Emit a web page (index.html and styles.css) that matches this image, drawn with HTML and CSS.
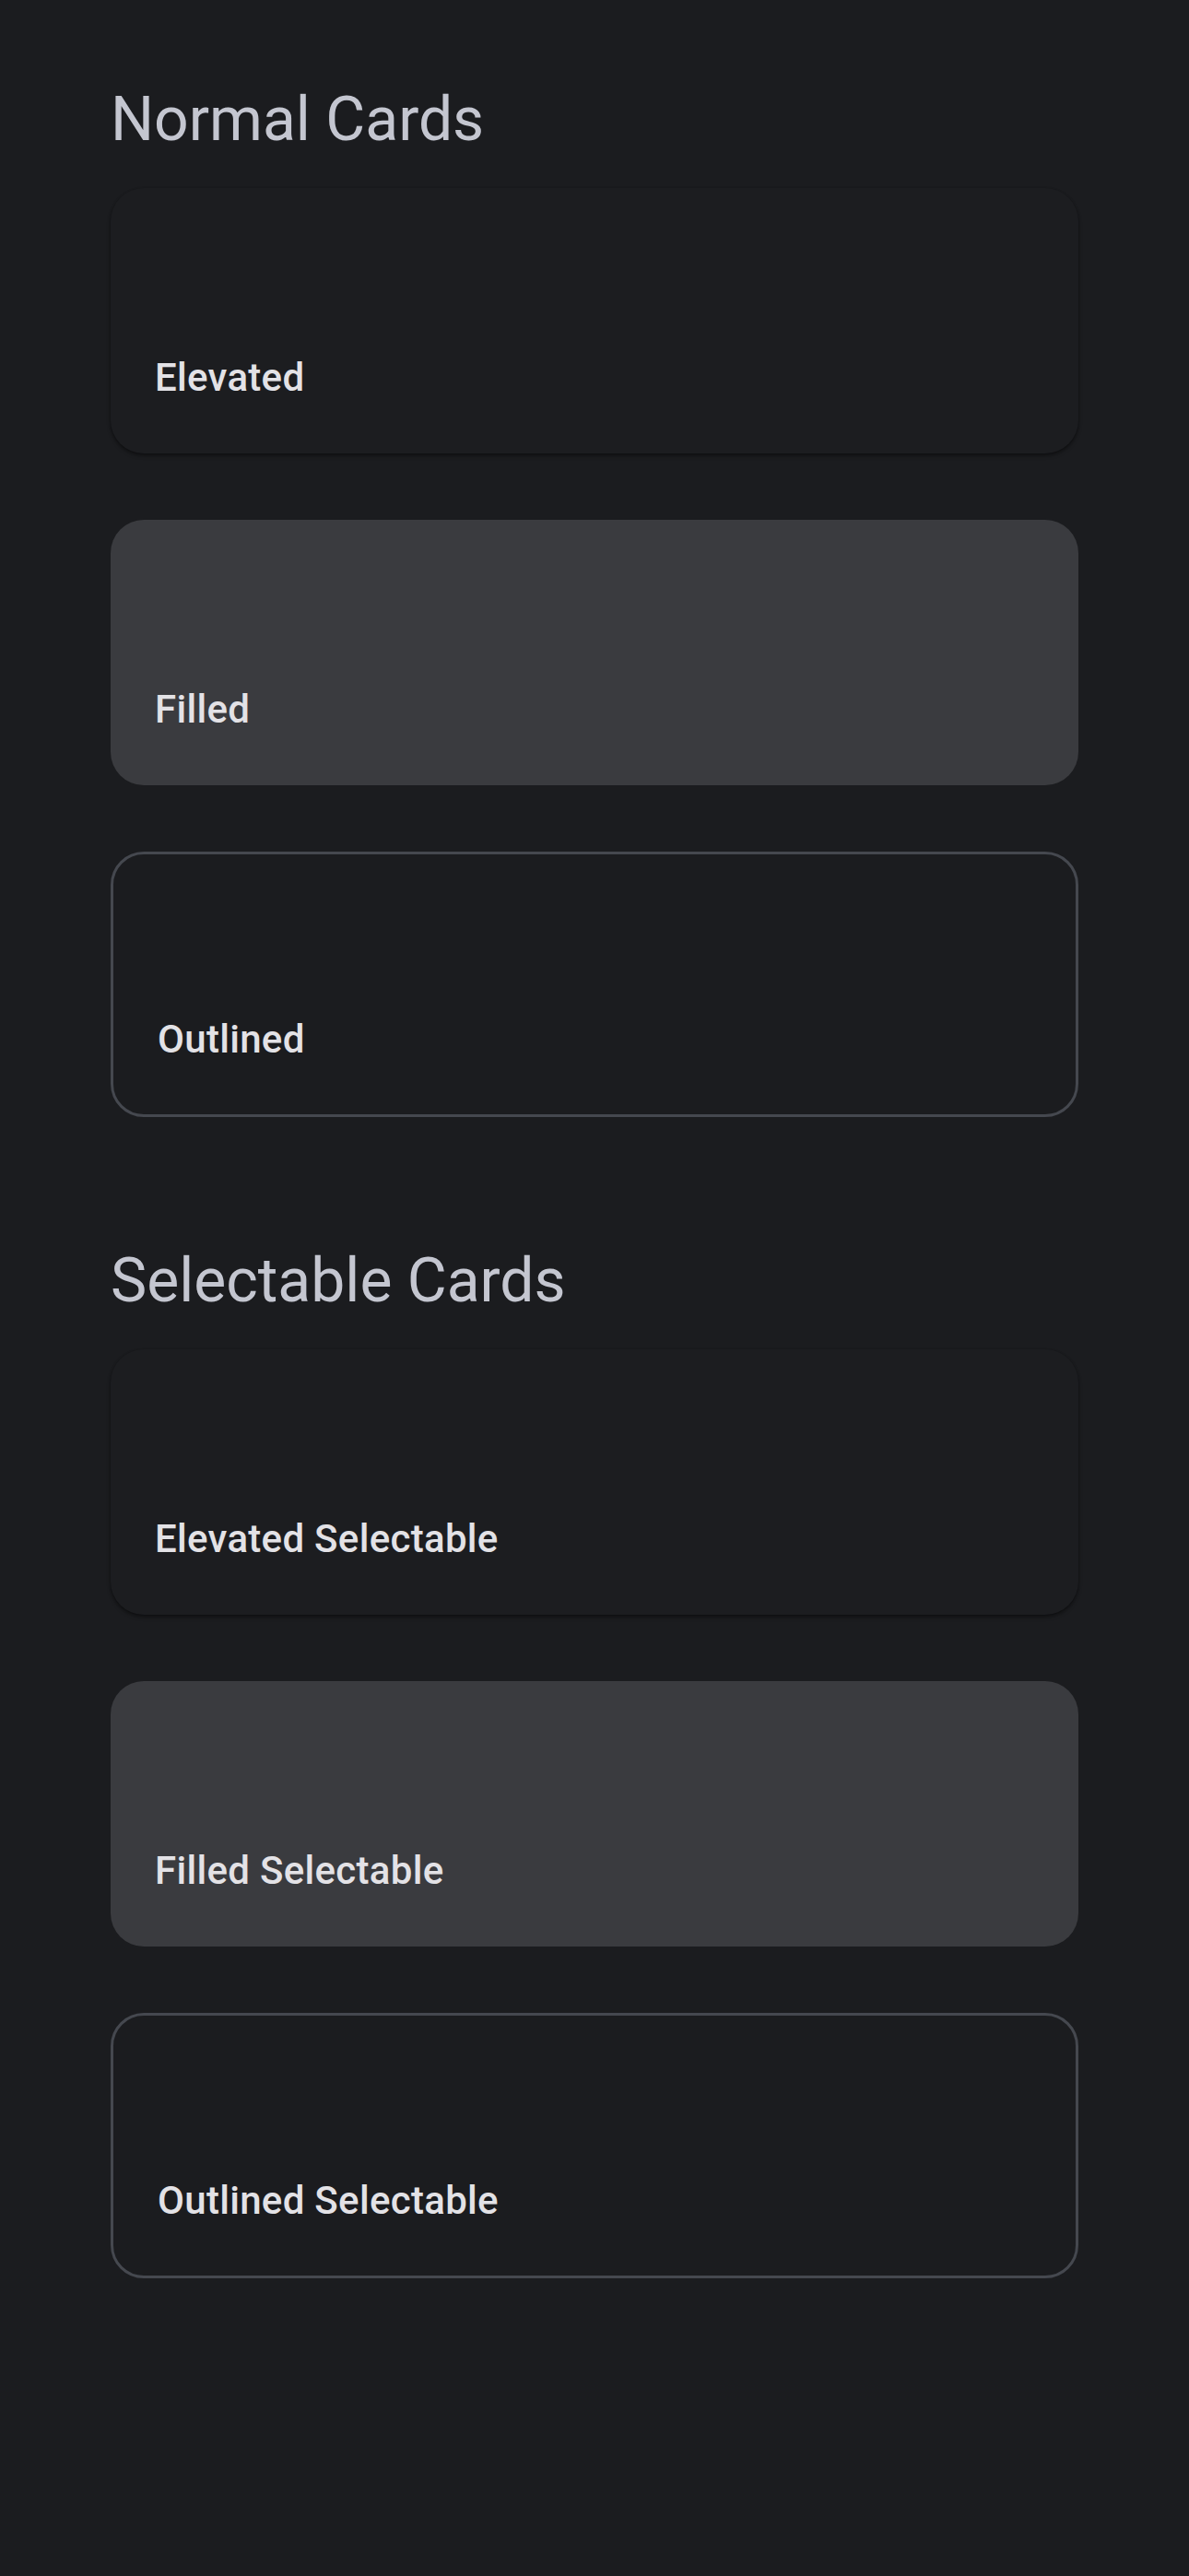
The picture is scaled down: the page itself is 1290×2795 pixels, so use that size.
FILE: index.html
```html
<!DOCTYPE html>
<html lang="en">
<head>
<meta charset="utf-8">
<title>Cards</title>
<link rel="stylesheet" href="styles.css">
</head>
<body>
<main class="page">
  <section class="section">
    <h2 class="section-title">Normal Cards</h2>
    <div class="card-list">
      <div class="card card-elevated"><span class="card-label">Elevated</span></div>
      <div class="card card-filled"><span class="card-label">Filled</span></div>
      <div class="card card-outlined"><span class="card-label">Outlined</span></div>
    </div>
  </section>
  <section class="section section-second">
    <h2 class="section-title">Selectable Cards</h2>
    <div class="card-list">
      <div class="card card-elevated"><span class="card-label">Elevated Selectable</span></div>
      <div class="card card-filled"><span class="card-label">Filled Selectable</span></div>
      <div class="card card-outlined"><span class="card-label">Outlined Selectable</span></div>
    </div>
  </section>
</main>
</body>
</html>
```

FILE: styles.css
```css
html, body {
  margin: 0;
  padding: 0;
  background: #1b1c1f;
}

body {
  font-family: Roboto, "Noto Sans", "Liberation Sans", sans-serif;
  min-height: 2795px;
}

.page {
  padding: 88px 120px 0 120px;
}

.section-title {
  margin: 0 0 32px 0;
  font-size: 66px;
  line-height: 84px;
  font-weight: 400;
  color: #c4c6d0;
  letter-spacing: 0;
}

.section-second {
  margin-top: 136px;
}

.card-list {
  display: flex;
  flex-direction: column;
  gap: 72px;
}

.card {
  box-sizing: border-box;
  height: 288px;
  border-radius: 36px;
  padding: 0 48px 52px 48px;
  display: flex;
  flex-direction: column;
  justify-content: flex-end;
}

.card-label {
  font-size: 42px;
  line-height: 60px;
  font-weight: 500;
  color: #e3e2e6;
  letter-spacing: 0.3px;
}

.card-elevated {
  background: #1c1d20;
  box-shadow: 0 3px 4px rgba(0, 0, 0, 0.28), 0 1px 3px rgba(0, 0, 0, 0.3);
}

.card-filled {
  background: #3a3b3f;
}

.card-outlined {
  background: #1b1c1f;
  border: 3px solid #45484f;
  padding-bottom: 51px;
}
```
